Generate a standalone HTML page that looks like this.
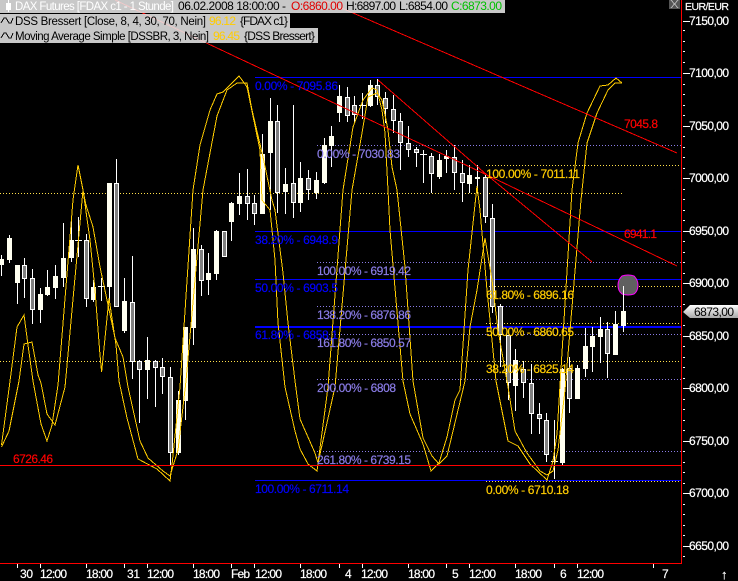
<!DOCTYPE html>
<html>
<head>
<meta charset="utf-8">
<style>
html,body{margin:0;padding:0;background:#000;}
svg{display:block;}
text{font-family:"Liberation Sans",sans-serif;font-size:12px;stroke-width:.2;}
.c{shape-rendering:crispEdges;}
.b{fill:#0000ff;}
.p{fill:#8a7ce6;}
.y{fill:#ffcc00;}
.r{fill:#ff0000;}
.w{fill:#fff;}
.k{fill:#000;}
g.b text{stroke:#0000ff;}
g.p text{stroke:#8a7ce6;}
g.y text{stroke:#ffcc00;}
g.r text{stroke:#ff0000;}
g.w text{stroke:#fff;}
</style>
</head>
<body>
<svg width="738" height="581" viewBox="0 0 738 581" xmlns="http://www.w3.org/2000/svg">
<rect width="738" height="581" fill="#000"/>

<!-- dotted lines -->
<g class="c" stroke-width="1" stroke-dasharray="1 2" fill="none">
<g stroke="#ffe04a">
<path d="M0 193.5H622"/>
<path d="M0 361.5H681"/>
<path d="M486 165.5H681"/>
<path d="M486 286.5H681"/>
<path d="M486 323.5H681"/>
<path d="M486 481.5H681"/>
</g>
<g stroke="#8a7ce6">
<path d="M317 145.5H681"/>
<path d="M317 262.5H681"/>
<path d="M317 306.5H681"/>
<path d="M317 334.5H681"/>
<path d="M317 379.5H681"/>
<path d="M317 451.5H681"/>
</g>
</g>

<!-- blue lines -->
<g class="c b">
<rect x="255" y="77" width="426" height="1"/>
<rect x="255" y="231" width="426" height="1"/>
<rect x="255" y="279" width="426" height="1"/>
<rect x="255" y="326" width="426" height="2"/>
<rect x="255" y="480" width="426" height="1"/>
</g>

<!-- candle wicks -->
<path class="c" stroke="#fff" stroke-width="1" fill="none" d="M1.5 255V276M9.5 235V263M17.5 265V304M24.5 258V298M32.5 269V324M40.5 288V323M47.5 270V296M55.5 265V299M63.5 223V287M71.5 218V262M78.5 217V257M75 240.5H82M86.5 234V307M93.5 280V302M101.5 278V301M98 286.5H105M109.5 183V300M116.5 159V307M124.5 278V333M132.5 256V379M139.5 360V423M147.5 337V399M155.5 360V407M162.5 358V394M170.5 367V465M178.5 391V455M185.5 327V420M193.5 228V345M201.5 245V296M208.5 253V295M216.5 230V280M224.5 231V257M231.5 202V241M239.5 173V215M247.5 169V220M254.5 195V225M262.5 134V214M270.5 98V210M277.5 105V213M285.5 168V214M293.5 105V218M300.5 162V212M308.5 170V200M316.5 172V199M324.5 138V184M331.5 126V167M339.5 85V122M347.5 87V122M354.5 96V122M362.5 93V119M359 105.5H366M370.5 80V107M377.5 79V105M385.5 92V123M393.5 95V133M400.5 113V170M408.5 126V157M416.5 147V167M423.5 150V183M420 154.5H427M431.5 153V193M439.5 154V179M446.5 150V173M454.5 145V190M462.5 160V202M469.5 165V193M477.5 165V193M485.5 175V223M492.5 204V313M500.5 304V367M508.5 335V400M515.5 349V411M523.5 361V398M531.5 364V434M539.5 403V434M546.5 413V462M554.5 420V479M551 461.5H558M562.5 368V465M569.5 357V413M577.5 365V399M585.5 328V377M592.5 327V372M600.5 317V363M607.5 322V378M615.5 311V355M623.5 286V332"/>

<!-- white bodies -->
<path class="c" fill="#fffff0" d="M-1 259h5v6h-5zM7 238h5v22h-5zM15 265h5v18h-5zM38 294h5v16h-5zM45 287h5v8h-5zM53 276h5v12h-5zM61 258h5v20h-5zM69 240h5v18h-5zM91 287h5v13h-5zM107 183h5v104h-5zM122 301h5v30h-5zM145 360h5v10h-5zM176 400h5v53h-5zM183 327h5v74h-5zM191 249h5v79h-5zM206 273h5v7h-5zM214 231h5v43h-5zM229 203h5v19h-5zM237 196h5v8h-5zM260 154h5v60h-5zM268 121h5v32h-5zM283 184h5v8h-5zM298 178h5v25h-5zM314 180h5v13h-5zM322 145h5v38h-5zM329 136h5v10h-5zM337 96h5v17h-5zM368 85h5v21h-5zM437 160h5v17h-5zM444 156h5v3h-5zM467 175h5v9h-5zM475 177h5v2h-5zM513 360h5v26h-5zM560 369h5v94h-5zM575 368h5v31h-5zM583 346h5v23h-5zM590 336h5v11h-5zM598 329h5v8h-5zM613 324h5v31h-5zM621 311h5v15h-5z"/>

<!-- gray bodies -->
<path class="c" fill="#808080" stroke="#fff" stroke-width="1" d="M22.5 265.5h4v13h-4zM30.5 278.5h4v31h-4zM84.5 240.5h4v58h-4zM114.5 183.5h4v123h-4zM130.5 302.5h4v59h-4zM137.5 361.5h4v8h-4zM153.5 361.5h4v6h-4zM160.5 367.5h4v9h-4zM168.5 377.5h4v75h-4zM199.5 249.5h4v31h-4zM222.5 231.5h4v25h-4zM245.5 196.5h4v7h-4zM252.5 203.5h4v10h-4zM275.5 121.5h4v71h-4zM291.5 183.5h4v19h-4zM306.5 178.5h4v11h-4zM345.5 97.5h4v18h-4zM352.5 105.5h4v9h-4zM375.5 85.5h4v11h-4zM383.5 98.5h4v10h-4zM391.5 109.5h4v11h-4zM398.5 121.5h4v21h-4zM406.5 143.5h4v6h-4zM414.5 149.5h4v3h-4zM429.5 156.5h4v17h-4zM452.5 157.5h4v15h-4zM460.5 173.5h4v9h-4zM483.5 177.5h4v39h-4zM490.5 218.5h4v88h-4zM498.5 306.5h4v28h-4zM506.5 335.5h4v47h-4zM521.5 369.5h4v13h-4zM529.5 383.5h4v30h-4zM537.5 414.5h4v4h-4zM544.5 420.5h4v34h-4zM567.5 368.5h4v30h-4zM605.5 329.5h4v24h-4z"/>

<!-- indicator curves -->
<g class="c" fill="none" stroke="#ffcc00" stroke-width="1">
<polyline points="1.5,445 9.5,385 17,327 24,315 28,345 33,381 41,424 47,441 52,425 58,385 73,200 78,165 83,190 90,240 95,290 100,355 101.6,372 109,298 116,345 119,381 127,418 138,459 157,469 170,481 172,465 180,387 193,190 200,145 210,110 217,94 223,92 233,82 239,76 242,80 247,87 260,150 262,200 270,210 275,260 278,323 285,387 295,431 300,449 308,464 317,471 328,387 343,190 353,127 363,100 372,88 377,90 382,110 385,133 388,190 390,230 398,323 403,381 410,414 423,444 431,471 439,463 447,437 455,400 460,390 468,270 477,186 480,210 487,290 492,340 496,381 508,441 518,446 530,464 547,480 553,461 557,434 572,190 578,143 587,113 600,86 608,85 616,78 622,83"/>
<polyline points="1.5,447 9,431 19,381 24,344 32,342 38,375 41,383 47,414 55,425 65,387 83,190 86,205 93,227 100,267 107,300 115,338 123,357 128,387 140,441 148,458 163,471 170,476 178,450 186,381 203,190 217,116 227,90 237,83 247,83 252,110 263,157 272,200 275,210 283,273 288,323 295,381 300,419 315,453 318,463 335,387 352,190 362,133 368,97 377,93 382,100 388,130 392,167 397,190 405,267 413,381 423,438 432,456 439,464 447,456 465,381 470,327 477,290 485,238 492,280 498,330 508,387 515,431 527,453 540,471 547,475 553,471 558,450 565,390 581,200 587,143 597,113 608,90 615,83 622,83"/>
</g>

<!-- red lines -->
<g class="c" fill="none" stroke="#ff0000" stroke-width="1">
<path d="M115 0L487 175L677 266"/>
<path d="M378 80L487 175L592 262"/>
<path d="M323 0L677 153"/>
</g>
<rect class="c r" x="0" y="465" width="681" height="1"/>

<!-- axis frame -->
<g class="c r">
<rect x="681" y="0" width="1" height="564"/>
<rect x="0" y="563" width="682" height="1"/>
</g>

<!-- price ticks -->
<path class="c" stroke="#fff" stroke-width="1" fill="none" d="M683 21.5h7M683 73.5h7M683 126.5h7M683 178.5h7M683 231.5h7M683 283.5h7M683 336.5h7M683 388.5h7M683 441.5h7M683 493.5h7M683 546.5h7M683 30.5h2M683 41.5h2M683 51.5h2M683 62.5h2M683 84.5h2M683 94.5h2M683 105.5h2M683 115.5h2M683 136.5h2M683 147.5h2M683 157.5h2M683 168.5h2M683 189.5h2M683 199.5h2M683 210.5h2M683 220.5h2M683 241.5h2M683 252.5h2M683 262.5h2M683 273.5h2M683 294.5h2M683 304.5h2M683 325.5h2M683 346.5h2M683 357.5h2M683 367.5h2M683 378.5h2M683 399.5h2M683 409.5h2M683 420.5h2M683 430.5h2M683 451.5h2M683 462.5h2M683 472.5h2M683 483.5h2M683 504.5h2M683 514.5h2M683 525.5h2M683 535.5h2M683 556.5h2"/>

<!-- price labels -->
<g class="w">
<text x="685" y="10" style="font-size:10.5px" textLength="44">EUR/EUR</text>
<text x="689" y="25" textLength="40">7150,00</text>
<text x="689" y="77" textLength="40">7100,00</text>
<text x="689" y="130" textLength="40">7050,00</text>
<text x="689" y="182" textLength="40">7000,00</text>
<text x="689" y="235" textLength="40">6950,00</text>
<text x="689" y="287" textLength="40">6900,00</text>
<text x="689" y="340" textLength="40">6850,00</text>
<text x="689" y="392" textLength="40">6800,00</text>
<text x="689" y="445" textLength="40">6750,00</text>
<text x="689" y="497" textLength="40">6700,00</text>
<text x="689" y="550" textLength="40">6650,00</text>
</g>

<!-- current price tag -->
<defs>
<linearGradient id="g" x1="0" y1="0" x2="0" y2="1">
<stop offset="0" stop-color="#ffffff"/>
<stop offset="1" stop-color="#a8a8a8"/>
</linearGradient>
</defs>
<path d="M683 312L690 305H738V318H690Z" fill="url(#g)"/>
<text x="694" y="316" class="k" textLength="40">6873,00</text>

<!-- time ticks -->
<path class="c" stroke="#fff" stroke-width="1" fill="none" d="M17.5 564v4M40.5 564v4M86.5 564v4M124.5 564v4M147.5 564v4M193.5 564v4M231.5 564v4M254.5 564v4M300.5 564v4M339.5 564v4M362.5 564v4M408.5 564v4M446.5 564v4M469.5 564v4M515.5 564v4M554.5 564v4M577.5 564v4M653.5 564v4"/>

<!-- time labels -->
<g class="w">
<text x="20" y="578" textLength="13">30</text>
<text x="40" y="578" textLength="27">12:00</text>
<text x="86" y="578" textLength="27">18:00</text>
<text x="127" y="578" textLength="13">31</text>
<text x="147" y="578" textLength="27">12:00</text>
<text x="193" y="578" textLength="27">18:00</text>
<text x="231" y="578" textLength="19">Feb</text>
<text x="255" y="578" textLength="27">12:00</text>
<text x="300" y="578" textLength="27">18:00</text>
<text x="345" y="578">4</text>
<text x="361" y="578" textLength="27">12:00</text>
<text x="408" y="578" textLength="27">18:00</text>
<text x="452" y="578">5</text>
<text x="469" y="578" textLength="27">12:00</text>
<text x="515" y="578" textLength="27">18:00</text>
<text x="560" y="578">6</text>
<text x="577" y="578" textLength="27">12:00</text>
<text x="662" y="578">7</text>
<text x="721" y="579" style="font-size:13px">↑</text>
</g>

<!-- fib labels blue -->
<g class="b">
<text x="255" y="90" textLength="83">0.00% - 7095.86</text>
<text x="255" y="244" textLength="83">38.20% - 6948.9</text>
<text x="255" y="292" textLength="83">50.00% - 6903.5</text>
<text x="255" y="339" textLength="83">61.80% - 6858.1</text>
<text x="255" y="493" textLength="94">100.00% - 6711.14</text>
</g>

<!-- fib labels purple -->
<g class="p">
<text x="317" y="158" textLength="83">0.00% - 7030.83</text>
<text x="317" y="275" textLength="94">100.00% - 6919.42</text>
<text x="317" y="319" textLength="94">138.20% - 6876.86</text>
<text x="317" y="347" textLength="94">161.80% - 6850.57</text>
<text x="317" y="392" textLength="79">200.00% - 6808</text>
<text x="317" y="464" textLength="94">261.80% - 6739.15</text>
</g>

<!-- fib labels yellow -->
<g class="y">
<text x="486" y="178" textLength="94">100.00% - 7011.11</text>
<text x="486" y="299" textLength="88">61.80% - 6896.16</text>
<text x="486" y="336" textLength="88">50.00% - 6860.65</text>
<text x="486" y="373" textLength="88">38.20% - 6825.14</text>
<text x="486" y="494" textLength="83">0.00% - 6710.18</text>
</g>

<!-- red labels -->
<g class="r">
<text x="13" y="463" textLength="40">6726.46</text>
<text x="624" y="128" textLength="34">7045.8</text>
<text x="624" y="238" textLength="33">6941.1</text>
</g>

<!-- marker -->
<path d="M622 276Q628 274 634 276Q638 280 638 285Q638 291 634 294Q628 296 622 294Q618 291 618 285Q618 280 622 276Z" fill="#606060" stroke="#ff00ff" stroke-width="1"/>
<rect class="c" x="623" y="286" width="1" height="16" fill="#fff"/>

<!-- header bars -->
<g class="c">
<rect x="0" y="0" width="505" height="13" fill="#ebebeb" fill-opacity=".85"/>
<rect x="0" y="14" width="290" height="14" fill="#ebebeb" fill-opacity=".85"/>
<rect x="0" y="28" width="318" height="15" fill="#ebebeb" fill-opacity=".85"/>
</g>
<rect class="c" x="6" y="3" width="5" height="7" fill="#fff"/>
<rect class="c" x="8" y="0" width="1" height="12" fill="#fff"/>
<polyline class="c" points="1,23 4,18 6,18 9,23 11,23 13,18" fill="none" stroke="#000" stroke-width="1"/>
<polyline class="c" points="1,38 4,33 6,33 9,38 11,38 13,33" fill="none" stroke="#000" stroke-width="1"/>

<text x="15" y="10" fill="#fff" style="font-size:11.5px" textLength="159">DAX Futures [FDAX c1 - 1 Stunde]</text>
<text x="178" y="10" fill="#000" textLength="108">06.02.2008 18:00:00 -</text>
<text x="291" y="10" fill="#e00000" textLength="52">O:6860.00</text>
<text x="346" y="10" fill="#000" textLength="50">H:6897.00</text>
<text x="399" y="10" fill="#000" textLength="49">L:6854.00</text>
<text x="451" y="10" fill="#00c000" textLength="51">C:6873.00</text>

<text x="15" y="25" fill="#000" style="font-size:11.5px" textLength="191">DSS Bressert [Close, 8, 4, 30, 70, Nein]</text>
<text x="209" y="25" fill="#ffcc00" textLength="27">96.12</text>
<text x="240" y="25" fill="#000" textLength="48">{FDAX c1}</text>

<text x="15" y="40" fill="#000" style="font-size:11.5px" textLength="194">Moving Average Simple [DSSBR, 3, Nein]</text>
<text x="213" y="40" fill="#ffcc00" textLength="27">96.45</text>
<text x="244" y="40" fill="#000" textLength="71">{DSS Bressert}</text>

<!-- close box -->
<rect class="c" x="669" y="0" width="11" height="9" fill="#555"/>
<path class="c" d="M671 0L678 8M678 0L671 8" stroke="#b0b0b0" stroke-width="1" fill="none"/>
</svg>
</body>
</html>
